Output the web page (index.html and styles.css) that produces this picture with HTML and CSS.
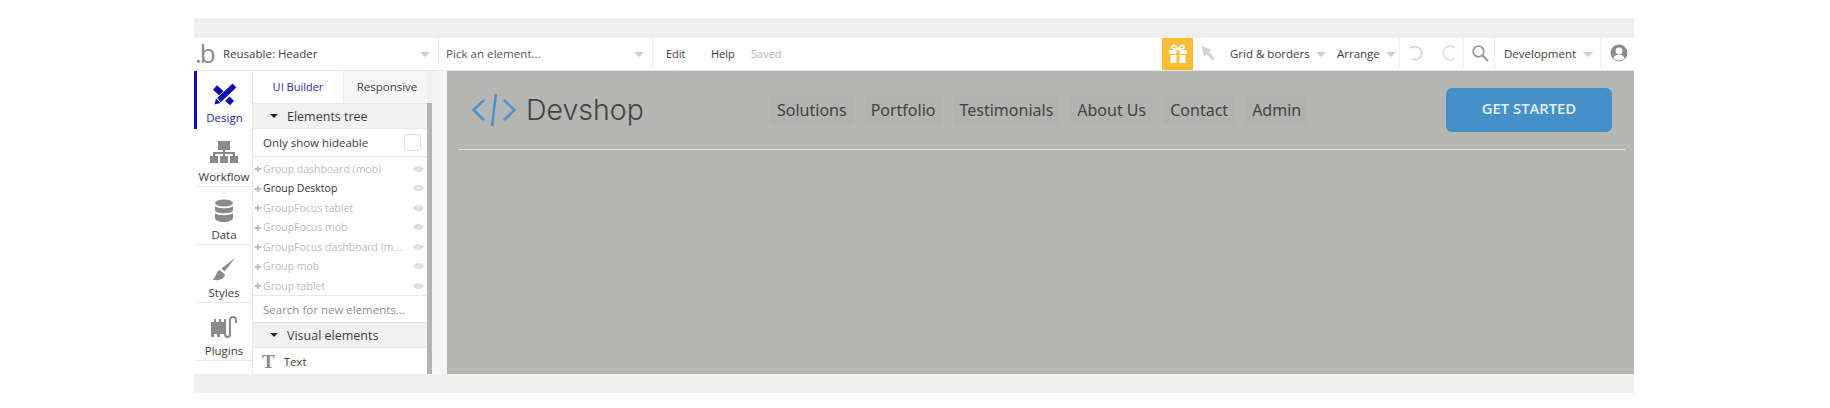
FILE: index.html
```html
<!DOCTYPE html>
<html lang="en">
<head>
<meta charset="utf-8">
<title>Bubble editor</title>
<link rel="stylesheet" href="styles.css">
</head>
<body>
<div class="frame">
  <header class="topbar">
    <div class="logo">.b</div>
    <div class="picker picker-a"><span>Reusable: Header</span><i class="caret"></i></div>
    <div class="picker picker-b"><span>Pick an element...</span><i class="caret"></i></div>
    <nav class="menu"><span class="edit">Edit</span><span class="help">Help</span><span class="saved">Saved</span></nav>
    <div class="gift">
      <svg width="20" height="20" viewBox="0 0 20 20"><path fill="#fff" d="M1 6h18v4H1zM2.500 11h15v8h-15z"/><path fill="#febb34" d="M8.500 6h3v13h-3z"/><path fill="none" stroke="#fff" stroke-width="1.600" d="M10 5.500C8 1 4.500 .5 4 2.500S6 5.500 10 5.500C14 5.500 16.500 4.500 16 2.500S12 1 10 5.500Z"/></svg>
    </div>
    <div class="pointer">
      <svg width="16" height="16" viewBox="0 0 16 16"><path fill="#d5d5d5" d="M1 1l11 3.500-3 2L15 13l-2.500 2.500L6.500 9l-2 3z"/></svg>
    </div>
    <div class="tool grid"><span>Grid &amp; borders</span><i class="caret"></i></div>
    <div class="tool arrange"><span>Arrange</span><i class="caret"></i></div>
    <div class="cell undo">
      <svg width="18" height="18" viewBox="0 0 18 18"><path fill="none" stroke="#d8d8d8" stroke-width="1.800" d="M1.500 3.500l3.500-.5a6.500 6.500 0 1 1 -1.500 11.500"/></svg>
      <svg class="redo" width="18" height="18" viewBox="0 0 18 18"><path fill="none" stroke="#e2e2e2" stroke-width="1.800" d="M16 3.800a7 7 0 1 0 0 10.400"/></svg>
    </div>
    <div class="cell search">
      <svg width="18" height="18" viewBox="0 0 18 18"><circle cx="7.500" cy="7.500" r="5.300" fill="none" stroke="#9a9a9a" stroke-width="1.800"/><path stroke="#9a9a9a" stroke-width="2.200" d="M11.500 11.500l5.500 5.500"/></svg>
    </div>
    <div class="cell dev"><span>Development</span><i class="caret"></i></div>
    <div class="user">
      <svg width="18" height="18" viewBox="0 0 18 18"><circle cx="9" cy="9" r="8.500" fill="#8f8a88"/><circle cx="9" cy="7" r="3.400" fill="#fff"/><path fill="#fff" d="M3.500 14.500c.5-3 3-3.800 5.500-3.800s5 .8 5.500 3.800A7.500 7.500 0 0 1 9 16.500a7.500 7.500 0 0 1-5.500-2z"/></svg>
    </div>
  </header>

  <div class="workspace">
    <aside class="rail">
      <div class="rail-item active">
        <svg width="24" height="24" viewBox="0 0 24 24"><path fill="none" stroke="#0c0cb8" stroke-width="6" d="M2 5.500L19 21"/><path fill="none" stroke="#fff" stroke-width="8" d="M22 4L7 18"/><path fill="none" stroke="#0c0cb8" stroke-width="5.500" d="M21.500 3.500L6 18"/><path fill="#0c0cb8" d="M1.500 22.500l1.500-6 4.500 4.500z"/></svg>
        <span>Design</span>
      </div>
      <div class="rail-item">
        <svg width="28" height="24" viewBox="0 0 28 24"><path fill="#8a8a8a" d="M8 0h12v9H8zM13 9h2v3h-2zM3 11h22v4h-2v-2H15v2h-2v-2H5v2H3zM0 15h8v7H0zM10 15h8v7h-8zM20 15h8v7h-8z"/></svg>
        <span>Workflow</span>
      </div>
      <div class="rail-item">
        <svg width="20" height="24" viewBox="0 0 20 24"><ellipse cx="10" cy="4" rx="9" ry="3.500" fill="#8a8a8a"/><path fill="#8a8a8a" d="M1 7c2 3 16 3 18 0v5c-2 3-16 3-18 0zM1 14c2 3 16 3 18 0v5c0 2-4 4-9 4s-9-2-9-4z"/></svg>
        <span>Data</span>
      </div>
      <div class="rail-item">
        <svg width="24" height="24" viewBox="0 0 24 24"><path fill="#8a8a8a" d="M23.500 .5L9.500 11.500l3 3zM8 13c-4 1-3 6-7.500 9.500 6 2 12-.5 12.500-5z"/></svg>
        <span>Styles</span>
      </div>
      <div class="rail-item">
        <svg width="26" height="24" viewBox="0 0 26 24"><path fill="#8a8a8a" d="M0 7h13v12H9v3H6v-3H3v3H0z"/><path fill="none" stroke="#8a8a8a" stroke-width="2" d="M4 7V4M9 7V4M14 4v15c0 4 5 4 5 0V5c0-4 6-4 6 0v3"/></svg>
        <span>Plugins</span>
      </div>
    </aside>

    <section class="panel">
      <div class="tabs"><div class="tab on">UI Builder</div><div class="tab off">Responsive</div></div>
      <div class="head"><i class="tri"></i>Elements tree</div>
      <div class="only"><span>Only show hideable</span><i class="check"></i></div>
      <ul class="tree">
        <li><b>+</b><span>Group dashboard (mob)</span><svg class="eye"><use href="#eye"/></svg></li>
        <li class="dark"><b>+</b><span>Group Desktop</span><svg class="eye"><use href="#eye-open"/></svg></li>
        <li><b>+</b><span>GroupFocus tablet</span><svg class="eye"><use href="#eye"/></svg></li>
        <li><b>+</b><span>GroupFocus mob</span><svg class="eye"><use href="#eye"/></svg></li>
        <li><b>+</b><span>GroupFocus dashboard (m...</span><svg class="eye"><use href="#eye"/></svg></li>
        <li><b>+</b><span>Group mob</span><svg class="eye"><use href="#eye"/></svg></li>
        <li><b>+</b><span>Group tablet</span><svg class="eye"><use href="#eye"/></svg></li>
      </ul>
      <div class="find">Search for new elements...</div>
      <div class="head visual"><i class="tri"></i>Visual elements</div>
      <div class="element"><span class="big-t">T</span><span>Text</span></div>
    </section>
    <div class="scroll"></div>
    <div class="gutter"></div>

    <main class="canvas">
      <div class="page-head">
        <div class="brand">
          <svg width="46" height="34" viewBox="0 0 46 34"><path fill="none" stroke="#4a94ce" stroke-width="2.600" d="M13 7L2.500 17 13 27M33 7l10.500 10L33 27"/><path fill="none" stroke="#4a94ce" stroke-width="2.600" d="M25 1l-4 32"/></svg>
          <span>Devshop</span>
        </div>
        <ul class="links">
          <li>Solutions</li><li>Portfolio</li><li>Testimonials</li><li>About Us</li><li>Contact</li><li>Admin</li>
        </ul>
        <div class="cta">GET STARTED</div>
      </div>
      <div class="rule"></div>
    </main>
  </div>
</div>
<svg class="defs" width="0" height="0">
  <symbol id="eye" viewBox="0 0 12 10"><path fill="#dcdcdc" d="M0 5c3-4.500 9-4.500 12 0-3 4.500-9 4.500-12 0z"/><path stroke="#f6f6f6" d="M3 9.500L9 .5"/></symbol>
  <symbol id="eye-open" viewBox="0 0 12 10"><path fill="#dcdcdc" d="M0 5c3-4.500 9-4.500 12 0-3 4.500-9 4.500-12 0z"/><circle cx="6" cy="5" r="1.800" fill="#f4f4f4"/></symbol>
</svg>
</body>
</html>
```
FILE: styles.css
```css
* { box-sizing: border-box; }
html, body { margin: 0; padding: 0; background: #fff; }
body { font-family: "Open Sans", "Liberation Sans", sans-serif; color: #3b3b3b; height: 408px; overflow: hidden; padding: 18px 196px 15px 194px; }
ul { list-style: none; margin: 0; padding: 0; }
.defs { position: absolute; }
.frame { width: 1440px; height: 375px; background: #efefed; padding: 20px 0 19px; display: flex; flex-direction: column; }

.topbar { height: 33px; background: #fff; display: flex; align-items: stretch; font-size: 11.500px; border-bottom: 1px solid #e4e4e4; flex: none; padding-bottom: 2px; }
.logo { width: 24px; padding-left: 1px; font: 400 26px/30px "Open Sans", sans-serif; color: #8a8a8a; letter-spacing: -2px; }
.picker { display: flex; align-items: center; justify-content: space-between; border-right: 1px solid #eee; }
.picker-a { width: 221px; padding: 0 8px 0 5px; }
.picker-b { width: 214px; padding: 0 8px 0 7px; color: #555; font-size: 11.600px; }
.caret { display: block; width: 0; height: 0; border-left: 5px solid transparent; border-right: 5px solid transparent; border-top: 5px solid #c9ced2; flex: none; margin-top: 2px; }
.menu { width: 509px; display: flex; align-items: center; padding-left: 13px; font-size: 11px; }
.edit { width: 45px; }
.help { width: 40px; }
.saved { color: #b5b5b5; }
.gift { width: 31px; background: #febb34; display: flex; align-items: center; justify-content: center; flex: none; margin-bottom: -2px; }
.pointer { width: 37px; padding-left: 7px; display: flex; align-items: center; }
.tool { display: flex; align-items: center; gap: 6px; }
.grid { width: 107px; }
.arrange { width: 63px; border-right: 1px solid #eee; padding-right: 4px; }
.cell { display: flex; align-items: center; border-right: 1px solid #eee; }
.undo { width: 64px; padding-left: 8px; gap: 13px; }
.search { width: 31px; padding-left: 7px; }
.dev { width: 106px; padding-left: 9px; gap: 7px; }
.user { padding-left: 9px; display: flex; align-items: center; }

.workspace { flex: 1; min-height: 0; display: flex; }
.rail { width: 58px; background: #fff; flex: none; }
.rail-item { height: 58px; border-bottom: 1px solid #e6e6e6; display: flex; flex-direction: column; align-items: center; justify-content: flex-end; padding-bottom: 2px; font-size: 11.500px; gap: 4px; margin-left: 2px; }
.rail-item.active { margin-left: 0; border-left: 3px solid #0c0cb8; border-bottom: none; color: #2323a8; padding-bottom: 4px; }

.panel { width: 175px; background: #fff; border-left: 1px solid #eaeaea; font-size: 11.500px; flex: none; overflow: hidden; }
.tabs { height: 32px; display: flex; }
.tab { display: flex; align-items: center; justify-content: center; padding-bottom: 2px; }
.on { width: 90px; color: #2b2ba8; font-size: 11px; }
.off { flex: 1; background: #f6f6f6; border-left: 1px solid #eaeaea; padding-left: 3px; }
.head { height: 26px; background: #f2f2f2; display: flex; align-items: center; padding-left: 17px; font-size: 12.500px; gap: 9px; border-top: 1px solid #e8e8e8; border-bottom: 1px solid #e8e8e8; }
.tri { width: 0; height: 0; border-left: 4px solid transparent; border-right: 4px solid transparent; border-top: 4px solid #222; }
.only { height: 28px; display: flex; align-items: center; justify-content: space-between; padding: 0 6px 0 10px; border-bottom: 1px solid #e8e8e8; }
.check { width: 17px; height: 17px; border: 1px solid #ddd; border-radius: 3px; }
.tree { height: 139px; border-bottom: 1px solid #e8e8e8; padding-top: 2px; }
.tree li { height: 19.500px; display: flex; align-items: center; color: #bcbcbc; font-size: 10.500px; padding-left: 1px; }
.tree li.dark { color: #333; }
.tree b { width: 9px; font-weight: 800; color: #bbb; font-size: 13px; line-height: 1; }
.tree span { flex: 1; }
.eye { width: 11px; height: 10px; margin-right: 3px; }
.find { height: 26px; display: flex; align-items: center; padding-left: 10px; color: #8e8e8e; font-size: 11.500px; }
.visual { gap: 9px; }
.element { display: flex; align-items: center; height: 26px; padding-left: 9px; gap: 9px; }
.big-t { font: 700 19px/1 "Liberation Serif", serif; color: #8a8a8a; }

.scroll { width: 5px; background: #b4b4b2; margin-top: 32px; flex: none; }
.gutter { width: 15px; background: #f5f5f5; flex: none; }

.canvas { flex: 1; background: #b5b5b3; padding: 0 9px 0 12px; }
.page-head { height: 78px; display: flex; align-items: center; }
.brand { width: 312px; display: flex; align-items: center; gap: 9px; padding-left: 12px; font: 300 28.500px/34px "Inter", sans-serif; color: #444; flex: none; }
.links { width: 561px; display: flex; font: 400 16px/30px "Noto Sans", sans-serif; color: #444; flex: none; }
.links li { padding: 0 6px; background: #b2b2b0; margin-right: 12px; }
.cta { margin-left: auto; margin-right: 13px; width: 166px; height: 44px; border-radius: 6px; background: #4391c8; color: #e8f1f7; font: 600 14.800px/41px "Open Sans", sans-serif; text-align: center; }
.rule { height: 1px; background: #e2e2e0; }
```
